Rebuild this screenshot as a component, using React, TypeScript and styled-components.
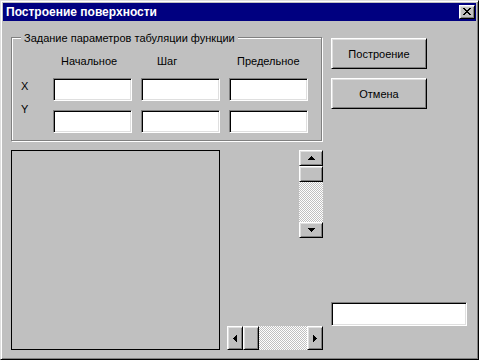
import styled, { createGlobalStyle, css } from 'styled-components'

const GlobalStyle = createGlobalStyle`
  html, body {
    margin: 0;
    padding: 0;
    background: #c0c0c0;
  }
  body {
    font-family: "Liberation Sans", Arial, sans-serif;
    font-size: 11px;
    color: #000;
  }
`

const raised = css`
  box-sizing: border-box;
  background: #c0c0c0;
  border: 1px solid;
  border-color: #fff #000 #000 #fff;
  box-shadow: inset 1px 1px #dfdfdf, inset -1px -1px #808080;
`

const sunken = css`
  box-sizing: border-box;
  background: #fff;
  border: 1px solid;
  border-color: #808080 #fff #fff #808080;
  box-shadow: inset 1px 1px #000, inset -1px -1px #dfdfdf;
`

const Window = styled.div`
  box-sizing: border-box;
  width: 479px;
  height: 360px;
  padding: 2px;
  background: #c0c0c0;
  border: 1px solid;
  border-color: #dfdfdf #000 #000 #dfdfdf;
  box-shadow: inset 1px 1px #fff, inset -1px -1px #808080;
  display: flex;
  flex-direction: column;
`

const TitleBar = styled.div`
  height: 18px;
  flex: none;
  background: #000080;
  display: flex;
  align-items: center;
  justify-content: space-between;
  padding: 0 1px 0 3px;
`

const Title = styled.span`
  color: #fff;
  font-weight: bold;
  font-size: 12px;
  line-height: 14px;
`

const CloseButton = styled.div`
  ${raised};
  width: 16px;
  height: 14px;
  display: flex;
  align-items: center;
  justify-content: center;
  padding-bottom: 1px;
`

const Body = styled.div`
  padding: 16px 0 0 8px;
  display: flex;
  flex-direction: column;
`

const TopRow = styled.div`
  display: flex;
  align-items: flex-start;
`

const Frame = styled.div`
  box-sizing: border-box;
  width: 311px;
  height: 104px;
  border: 1px solid #808080;
  box-shadow: inset 1px 1px #fff, 1px 1px #fff;
  display: flex;
  flex-direction: column;
  align-items: flex-start;
`

const FrameCaption = styled.span`
  background: #c0c0c0;
  padding: 0 3px;
  margin: -6px 0 0 9px;
  line-height: 13px;
`

const ParamGrid = styled.div`
  display: grid;
  grid-template-columns: 23px repeat(3, 79px);
  grid-template-rows: 14px 23px 23px;
  column-gap: 9px;
  row-gap: 9px;
  padding: 10px 0 0 9px;
`

const ColumnHead = styled.span<{ $col: number; $indent: number }>`
  grid-row: 1;
  grid-column: ${({ $col }) => $col};
  padding-left: ${({ $indent }) => $indent}px;
  line-height: 13px;
`

const AxisLabels = styled.div`
  grid-column: 1;
  grid-row: 2 / span 2;
  display: flex;
  flex-direction: column;
  gap: 10px;
  padding-top: 2px;
  line-height: 13px;
`

const TextBox = styled.div<{ $w?: number; $h?: number }>`
  ${sunken};
  width: ${({ $w }) => ($w ? `${$w}px` : '100%')};
  height: ${({ $h }) => $h ?? 23}px;
`

const GridBox = styled(TextBox)<{ $row: number; $col: number }>`
  grid-row: ${({ $row }) => $row};
  grid-column: ${({ $col }) => $col};
`

const ButtonColumn = styled.div`
  display: flex;
  flex-direction: column;
  gap: 9px;
  margin: 1px 0 0 9px;
`

const Button = styled.div`
  ${raised};
  width: 96px;
  height: 31px;
  display: flex;
  align-items: center;
  justify-content: center;
`

const BottomRow = styled.div`
  display: flex;
  margin-top: 9px;
  height: 200px;
`

const PictureBox = styled.div`
  box-sizing: border-box;
  width: 209px;
  height: 100%;
  border: 1px solid #000;
`

const ScrollArea = styled.div`
  width: 103px;
  display: flex;
  flex-direction: column;
  justify-content: space-between;
  align-items: flex-end;
`

const ScrollBar = styled.div<{ $vertical?: boolean }>`
  display: flex;
  flex-direction: ${({ $vertical }) => ($vertical ? 'column' : 'row')};
  width: ${({ $vertical }) => ($vertical ? 24 : 96)}px;
  height: ${({ $vertical }) => ($vertical ? 88 : 24)}px;
`

const ScrollButton = styled.div<{ $vertical?: boolean }>`
  ${raised};
  flex: none;
  width: ${({ $vertical }) => ($vertical ? '100%' : '16px')};
  height: ${({ $vertical }) => ($vertical ? '16px' : '100%')};
  display: flex;
  align-items: center;
  justify-content: center;
`

const Track = styled.div`
  flex: 1;
  background-color: #fff;
  background-image: repeating-conic-gradient(#c0c0c0 0% 25%, #fff 0% 50%);
  background-size: 2px 2px;
`

const RightColumn = styled.div`
  margin-left: 8px;
  display: flex;
  flex-direction: column;
  justify-content: flex-end;
  padding-bottom: 24px;
`

const arrows: Record<string, { w: number; h: number; d: string }> = {
  up: { w: 7, h: 4, d: 'M3 0h1v1h1v1h1v1h1v1H0V3h1V2h1V1h1z' },
  down: { w: 7, h: 4, d: 'M0 0h7v1H6v1H5v1H4v1H3V3H2V2H1V1H0z' },
  left: { w: 4, h: 7, d: 'M3 0h1v7H3V6H2V5H1V4H0V3h1V2h1V1h1z' },
  right: { w: 4, h: 7, d: 'M0 0h1v1h1v1h1v1h1v1H3v1H2v1H1v1H0z' },
}

const Arrow = ({ dir }: { dir: 'up' | 'down' | 'left' | 'right' }) => {
  const a = arrows[dir]
  return (
    <svg width={a.w} height={a.h} viewBox={`0 0 ${a.w} ${a.h}`} shapeRendering="crispEdges">
      <path d={a.d} fill="#000" />
    </svg>
  )
}

const CloseGlyph = () => (
  <svg width="8" height="7" viewBox="0 0 8 7" shapeRendering="crispEdges">
    <path
      fill="#000"
      d="M0 0h2v1H0zM6 0h2v1H6zM1 1h2v1H1zM5 1h2v1H5zM2 2h4v1H2zM3 3h2v1H3zM2 4h4v1H2zM1 5h2v1H1zM5 5h2v1H5zM0 6h2v1H0zM6 6h2v1H6z"
    />
  </svg>
)

const App = () => {
  return (
    <>
      <GlobalStyle />
      <Window>
        <TitleBar>
          <Title>Построение поверхности</Title>
          <CloseButton>
            <CloseGlyph />
          </CloseButton>
        </TitleBar>
        <Body>
          <TopRow>
            <Frame>
              <FrameCaption>Задание параметров табуляции функции</FrameCaption>
              <ParamGrid>
                <ColumnHead $col={2} $indent={8}>Начальное</ColumnHead>
                <ColumnHead $col={3} $indent={16}>Шаг</ColumnHead>
                <ColumnHead $col={4} $indent={8}>Предельное</ColumnHead>
                <AxisLabels>
                  <span>X</span>
                  <span>Y</span>
                </AxisLabels>
                {[2, 3].map((row) =>
                  [2, 3, 4].map((col) => <GridBox key={`${row}-${col}`} $row={row} $col={col} />)
                )}
              </ParamGrid>
            </Frame>
            <ButtonColumn>
              <Button>Построение</Button>
              <Button>Отмена</Button>
            </ButtonColumn>
          </TopRow>
          <BottomRow>
            <PictureBox />
            <ScrollArea>
              <ScrollBar $vertical>
                <ScrollButton $vertical>
                  <Arrow dir="up" />
                </ScrollButton>
                <ScrollButton $vertical />
                <Track />
                <ScrollButton $vertical>
                  <Arrow dir="down" />
                </ScrollButton>
              </ScrollBar>
              <ScrollBar>
                <ScrollButton>
                  <Arrow dir="left" />
                </ScrollButton>
                <ScrollButton />
                <Track />
                <ScrollButton>
                  <Arrow dir="right" />
                </ScrollButton>
              </ScrollBar>
            </ScrollArea>
            <RightColumn>
              <TextBox $w={136} $h={24} />
            </RightColumn>
          </BottomRow>
        </Body>
      </Window>
    </>
  )
}

export default App
